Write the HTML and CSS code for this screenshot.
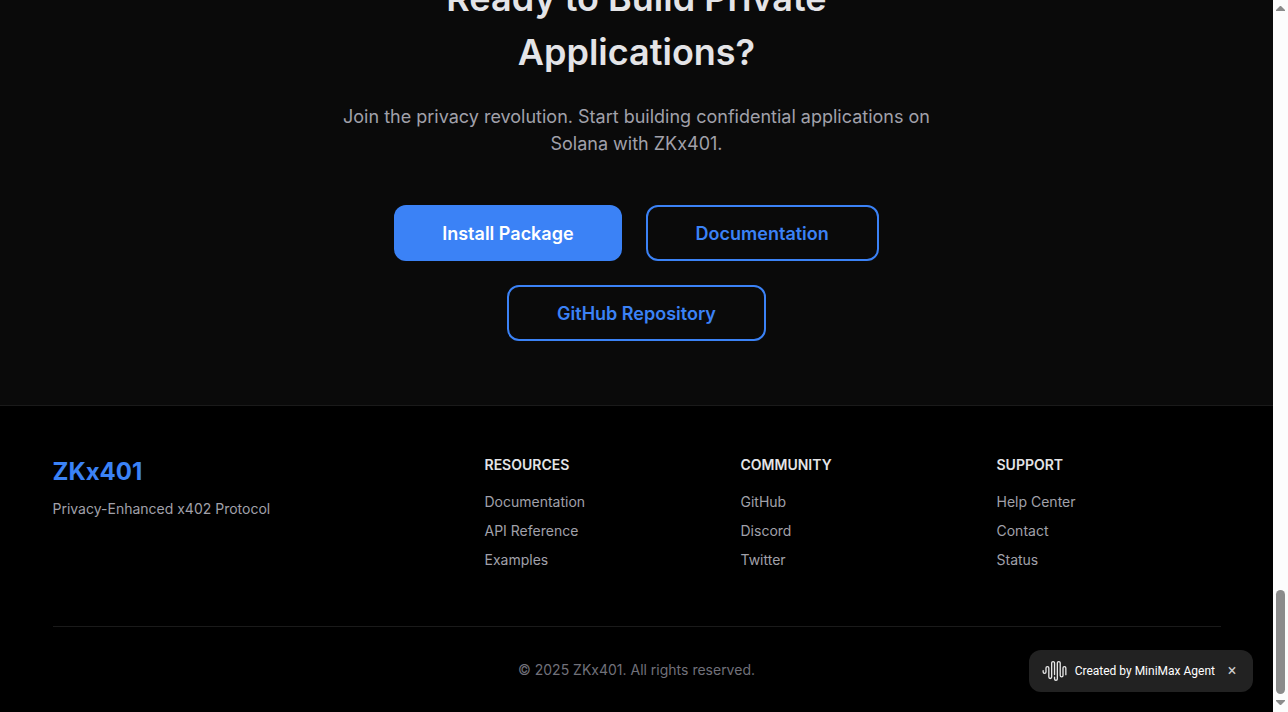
FILE: index.html
```html
<!DOCTYPE html>
<html lang="en">
<head>
<meta charset="utf-8">
<meta name="viewport" content="width=device-width, initial-scale=1">
<title>ZKx401</title>
<link rel="stylesheet" href="styles.css">
</head>
<body>
<div class="window">
  <div class="page">
    <main class="cta">
      <div class="cta-inner">
        <h2 class="cta-title">Ready to Build Private Applications?</h2>
        <p class="cta-text">Join the privacy revolution. Start building confidential applications on Solana with ZKx401.</p>
        <div class="cta-actions">
          <a class="btn btn-primary" href="#install">Install Package</a>
          <a class="btn btn-outline" href="#docs">Documentation</a>
          <a class="btn btn-outline" href="#github">GitHub Repository</a>
        </div>
      </div>
    </main>
    <footer class="footer">
      <div class="container">
        <div class="footer-grid">
          <div>
            <div class="brand">ZKx401</div>
            <p class="tagline">Privacy-Enhanced x402 Protocol</p>
          </div>
          <nav aria-labelledby="resources">
            <h3 class="footer-title" id="resources">RESOURCES</h3>
            <ul class="links">
              <li><a href="#docs">Documentation</a></li>
              <li><a href="#api">API Reference</a></li>
              <li><a href="#examples">Examples</a></li>
            </ul>
          </nav>
          <nav aria-labelledby="community">
            <h3 class="footer-title" id="community">COMMUNITY</h3>
            <ul class="links">
              <li><a href="#github">GitHub</a></li>
              <li><a href="#discord">Discord</a></li>
              <li><a href="#twitter">Twitter</a></li>
            </ul>
          </nav>
          <nav aria-labelledby="support">
            <h3 class="footer-title" id="support">SUPPORT</h3>
            <ul class="links">
              <li><a href="#help">Help Center</a></li>
              <li><a href="#contact">Contact</a></li>
              <li><a href="#status">Status</a></li>
            </ul>
          </nav>
        </div>
        <p class="copyright">© 2025 ZKx401. All rights reserved.</p>
      </div>
    </footer>
    <aside class="badge">
      <svg class="badge-logo" viewBox="0 0 24 24" aria-hidden="true"><path d="M16.278 2c1.156 0 2.093.927 2.093 2.07v12.501a.74.74 0 00.744.709.74.74 0 00.743-.709V9.099a2.06 2.06 0 012.071-2.049A2.06 2.06 0 0124 9.1v6.561a.649.649 0 01-.652.645.649.649 0 01-.653-.645V9.1a.762.762 0 00-.766-.758.762.762 0 00-.766.758v7.472a2.037 2.037 0 01-2.048 2.026 2.037 2.037 0 01-2.048-2.026v-12.5a.785.785 0 00-.788-.753.785.785 0 00-.789.752l-.001 15.904A2.037 2.037 0 0113.441 22a2.037 2.037 0 01-2.048-2.026V18.04c0-.356.292-.645.652-.645.36 0 .652.289.652.645v1.934c0 .263.142.506.372.638.23.131.514.131.744 0a.734.734 0 00.372-.638V4.07c0-1.143.937-2.07 2.093-2.07zm-5.674 0c1.156 0 2.093.927 2.093 2.07v11.523a.648.648 0 01-.652.645.648.648 0 01-.652-.645V4.07a.785.785 0 00-.789-.78.785.785 0 00-.789.78v14.013a2.06 2.06 0 01-2.07 2.048 2.06 2.06 0 01-2.071-2.048V9.1a.762.762 0 00-.766-.758.762.762 0 00-.766.758v3.8a2.06 2.06 0 01-2.071 2.049A2.06 2.06 0 010 12.9v-1.378c0-.357.292-.646.652-.646.36 0 .653.29.653.646V12.9c0 .418.343.757.766.757s.766-.339.766-.757V9.099a2.06 2.06 0 012.07-2.048 2.06 2.06 0 012.071 2.048v8.984c0 .419.343.758.767.758.423 0 .766-.339.766-.758V4.07c0-1.143.937-2.07 2.093-2.07z"/></svg>
      <span>Created by MiniMax Agent</span>
      <button class="badge-close" type="button" aria-label="Close">×</button>
    </aside>
  </div>
  <div class="scrollbar" aria-hidden="true">
    <svg class="arrow" viewBox="0 0 9 5"><path d="M0 5V4L4 0H5L9 4V5Z"/></svg>
    <div class="track"><div class="thumb"></div></div>
    <svg class="arrow" viewBox="0 0 9 5"><path d="M0 0V1L4 5H5L9 1V0Z"/></svg>
  </div>
</div>
</body>
</html>
```

FILE: styles.css
```css
* { box-sizing: border-box; }

body {
  margin: 0;
  background: #000;
  color: #e4e4e7;
  font: 14px/21px Inter, "Liberation Sans", sans-serif;
}

h2, h3, p, ul { margin: 0; padding: 0; }
ul { list-style: none; }
a { color: inherit; text-decoration: none; }

.window {
  display: flex;
  height: 100vh;
  overflow: hidden;
}

/* The view rests at the end of the page. */
.page {
  position: relative;
  flex: 1;
  display: flex;
  flex-direction: column;
  justify-content: flex-end;
  overflow: hidden;
}

.cta {
  flex: 1 0 auto;
  padding: 64px 16px;
  background: #0a0a0a;
  text-align: center;
}

.cta-inner { max-width: 600px; margin: 0 auto; }

.cta-title {
  margin-bottom: 24px;
  color: #e4e4e7;
  font-size: 36px;
  line-height: 54px;
  font-weight: 600;
}

.cta-text {
  margin-bottom: 48px;
  color: #a1a1aa;
  font-size: 18px;
  line-height: 27px;
}

.cta-actions {
  display: flex;
  flex-wrap: wrap;
  justify-content: center;
  gap: 24px;
}

.btn {
  display: inline-flex;
  align-items: center;
  height: 56px;
  padding: 0 48px;
  border-radius: 12px;
  font-size: 18px;
  font-weight: 600;
}

.btn-primary { background: #3b82f6; color: #fff; }
.btn-outline { border: 2px solid #3b82f6; color: #3b82f6; }

.footer {
  flex: none;
  padding: 48px 0 32px;
  border-top: 1px solid #1a1a1a;
  background: #000;
}

.container { max-width: 1200px; margin: 0 auto; padding: 0 16px; }

.footer-grid {
  display: grid;
  grid-template-columns: 25fr 14fr 14fr 14fr;
  gap: 32px;
  padding-bottom: 56px;
  border-bottom: 1px solid #1a1a1a;
}

.brand {
  margin-bottom: 8px;
  color: #3b82f6;
  font-size: 24px;
  line-height: 36px;
  font-weight: 700;
}

.tagline { color: #a1a1aa; }
.footer-title { margin-bottom: 16px; font-size: 14px; font-weight: 600; }
.links { display: grid; gap: 8px; color: #a1a1aa; }

.copyright {
  padding-top: 32px;
  color: #71717a;
  text-align: center;
}

.badge {
  position: absolute;
  right: 20px;
  bottom: 20px;
  display: flex;
  align-items: center;
  gap: 8px;
  height: 42px;
  padding: 0 12px 0 13px;
  border-radius: 12px;
  background: #222;
  color: #fff;
  font: 12px/18px Roboto, sans-serif;
}

.badge-logo { width: 25px; height: 24px; fill: #e8e8e8; }

.badge-close {
  width: 18px;
  height: 18px;
  padding: 0;
  border: 0;
  background: none;
  color: #ccc;
  font: 16px/18px Roboto, sans-serif;
}

.scrollbar {
  flex: none;
  display: flex;
  flex-direction: column;
  align-items: center;
  width: 15px;
  padding: 6px 0 7px;
  background: #fcfcfc;
}

.arrow { width: 9px; height: 5px; fill: #8b8b8b; }

.track {
  flex: 1;
  display: flex;
  flex-direction: column;
  padding: 4px 0 6px;
}

.track::before { content: ""; flex: 11; }

.thumb { flex: 2; width: 9px; border-radius: 5px; background: #8b8b8b; }
```
